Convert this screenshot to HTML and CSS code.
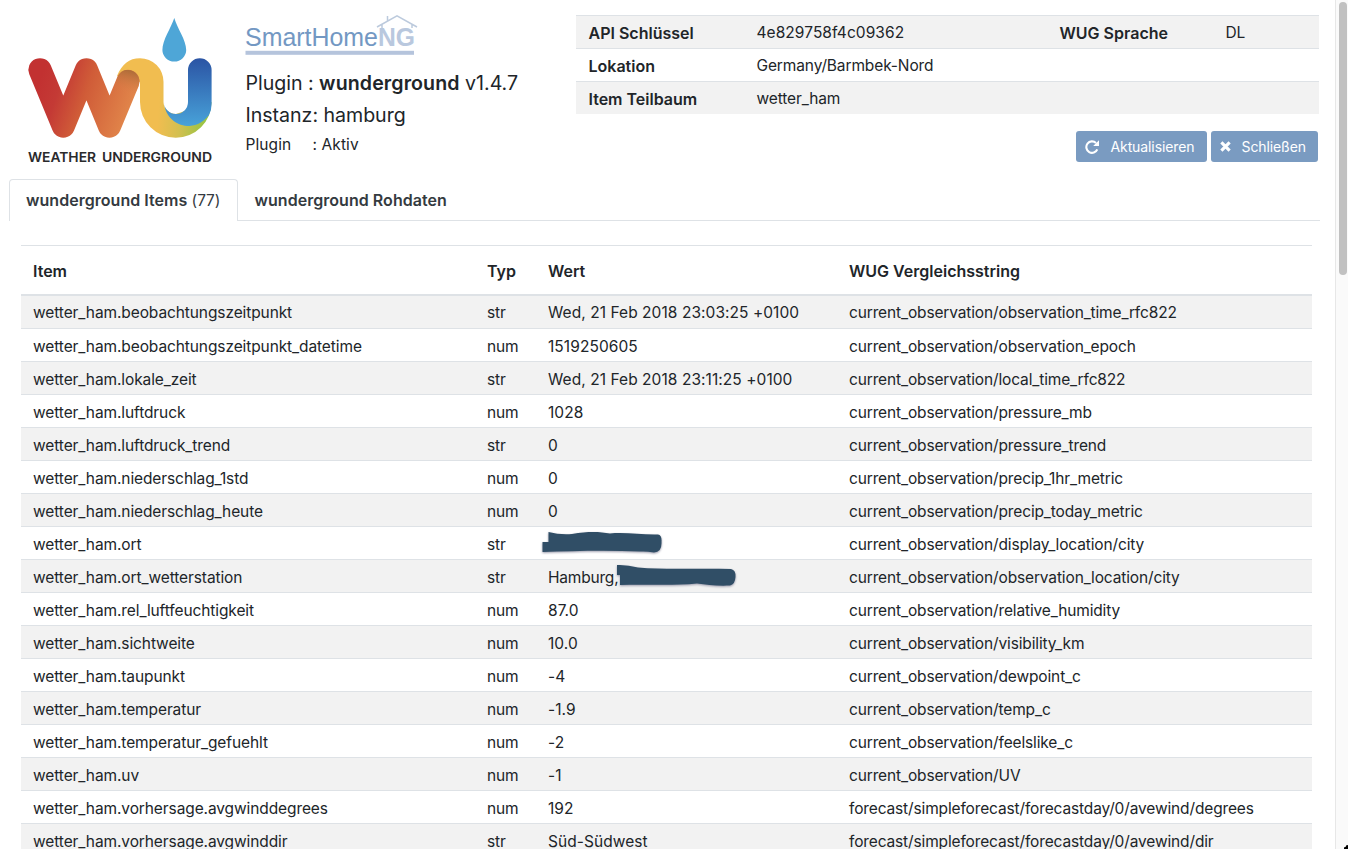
FILE: index.html
```html
<!DOCTYPE html>
<html lang="de">
<head>
<meta charset="utf-8">
<title>wunderground</title>
<link rel="stylesheet" href="styles.css">
</head>
<body>
<div class="page">
<main class="content">
<header class="head">
<svg class="wu-logo" viewBox="0 0 230 170" role="img" aria-label="Weather Underground">
<defs>
<linearGradient id="w" gradientUnits="userSpaceOnUse" x1="38" y1="85" x2="128" y2="116"><stop offset="0" stop-color="#c23131"/><stop offset=".22" stop-color="#c43a35"/><stop offset=".5" stop-color="#d05c38"/><stop offset="1" stop-color="#e1854a"/></linearGradient>
<linearGradient id="b" x1="0" y1="0" x2="0" y2="1"><stop offset="0" stop-color="#2b54a4"/><stop offset="1" stop-color="#48a2d9"/></linearGradient>
<linearGradient id="y" gradientUnits="userSpaceOnUse" x1="158" y1="115" x2="211" y2="118"><stop offset="0" stop-color="#f1bd50"/><stop offset=".4" stop-color="#d4bf50"/><stop offset="1" stop-color="#8bc540"/></linearGradient>
<linearGradient id="s" gradientUnits="userSpaceOnUse" x1="130" y1="70" x2="124" y2="93"><stop offset="0" stop-color="#ac6c38"/><stop offset="1" stop-color="#dd8249" stop-opacity="0"/></linearGradient>
</defs>
<path fill="url(#y)" d="M117 76C122 64 129 58.200 140 58.200A23.500 23.500 0 0 1 163.500 81.700V102A12.200 12.200 0 0 0 176 114L211.500 102A35.600 35.600 0 0 1 140 102V82Z"/>
<path fill="url(#b)" d="M188 70A11.800 11.800 0 0 1 211.600 70V104Q211.600 110 209 115C202 124 194 126 187 126C176 125 165 117 164 102A12 12 0 0 0 188 102Z"/>
<path fill="none" stroke="url(#w)" stroke-width="23.200" stroke-linecap="round" stroke-linejoin="round" d="M40 69.800 63.300 126 86.500 69.800 109.500 126 128 81.500"/>
<path fill="url(#s)" d="M117.500 77C121 70 125 70 128 70A11.500 11.500 0 0 1 139 85L132 100 113 92Z"/>
<path fill="#4ea6d7" d="M174.300 18C177 28 186.200 40 186.200 50A11.900 11.500 0 0 1 162.400 50C162.400 40 171 28 174.300 18Z"/>
<text class="wu-name" x="28" y="161.500" textLength="68" lengthAdjust="spacingAndGlyphs">WEATHER</text>
<text class="wu-name" x="102" y="161.500" textLength="110" lengthAdjust="spacingAndGlyphs">UNDERGROUND</text>
</svg>
<section class="plugin">
<svg class="shng" viewBox="0 0 180 56" role="img" aria-label="SmartHomeNG">
<text class="shng-a" x="0" y="46" textLength="133" lengthAdjust="spacingAndGlyphs">SmartHome</text>
<text class="shng-b" x="133" y="46" textLength="37" lengthAdjust="spacingAndGlyphs">NG</text>
<path class="roof" d="M132 27 152 15.800 172 27M142.500 21V16M137 24V28M167 24V28"/>
<rect class="shng-line" x="0.500" y="50.800" width="168.500" height="4"/>
</svg>
<h1 class="line big l1">Plugin : <b>wunderground</b> v1.4.7</h1>
<div class="line big l2">Instanz: hamburg</div>
<div class="line small"><span class="label">Plugin</span><span>: Aktiv</span></div>
</section>
<section class="side">
<table class="info">
<tr><th class="i1">API Schlüssel</th><td class="i2"><span class="key">4e829758f4c09362</span></td><th class="i3">WUG Sprache</th><td>DL</td></tr>
<tr><th>Lokation</th><td>Germany/Barmbek-Nord</td><td></td><td></td></tr>
<tr><th>Item Teilbaum</th><td>wetter_ham</td><td></td><td></td></tr>
</table>
<div class="actions">
<button class="btn reload"><svg class="ico" viewBox="0 0 14 14"><path fill="none" stroke="#fff" stroke-width="2.100" d="M12.300 9.300A5.700 5.700 0 1 1 11 3"/><path fill="#fff" d="M14 .3V6.100H8.200Z"/></svg><span>Aktualisieren</span></button>
<button class="btn close"><svg class="ico x" viewBox="0 0 12 12"><path stroke="#fff" stroke-width="3.400" d="M1.500 1.500 10.500 10.500M10.500 1.500 1.500 10.500"/></svg><span>Schließen</span></button>
</div>
</section>
</header>
<nav class="tabs"><a class="tab active"><b>wunderground Items</b> (77)</a><a class="tab second"><b>wunderground Rohdaten</b></a></nav>
<table class="items">
<thead><tr><th class="c1">Item</th><th class="c2">Typ</th><th class="c3">Wert</th><th>WUG Vergleichsstring</th></tr></thead>
<tbody>
<tr><td>wetter_ham.beobachtungszeitpunkt</td><td>str</td><td>Wed, 21 Feb 2018 23:03:25 +0100</td><td>current_observation/observation_time_rfc822</td></tr>
<tr><td>wetter_ham.beobachtungszeitpunkt_datetime</td><td>num</td><td>1519250605</td><td>current_observation/observation_epoch</td></tr>
<tr><td>wetter_ham.lokale_zeit</td><td>str</td><td>Wed, 21 Feb 2018 23:11:25 +0100</td><td>current_observation/local_time_rfc822</td></tr>
<tr><td>wetter_ham.luftdruck</td><td>num</td><td>1028</td><td>current_observation/pressure_mb</td></tr>
<tr><td>wetter_ham.luftdruck_trend</td><td>str</td><td>0</td><td>current_observation/pressure_trend</td></tr>
<tr><td>wetter_ham.niederschlag_1std</td><td>num</td><td>0</td><td>current_observation/precip_1hr_metric</td></tr>
<tr><td>wetter_ham.niederschlag_heute</td><td>num</td><td>0</td><td>current_observation/precip_today_metric</td></tr>
<tr><td>wetter_ham.ort</td><td>str</td><td class="mark"><svg class="scribble s1" viewBox="0 0 122 24"><path d="M6.500 2Q18 5 30 4C48 1 58 2 68 3.500 84 2 100 5 116 4.500Q120 5 119.500 12 120 22 112 22.500 104 21 98 21.500C65 20 30 21 .5 22V12H6.500Z"/></svg></td><td>current_observation/display_location/city</td></tr>
<tr><td>wetter_ham.ort_wetterstation</td><td>str</td><td class="mark">Hamburg,<svg class="scribble s2" viewBox="0 0 122 24"><path d="M0 2Q10 1.500 21 4.500C50 7 80 5 114 6Q119 7 118.500 14 118 21.500 113 22.500C100 23 90 22 80 20.500 55 23 30 21 3 22V12H0Z"/></svg></td><td>current_observation/observation_location/city</td></tr>
<tr><td>wetter_ham.rel_luftfeuchtigkeit</td><td>num</td><td>87.0</td><td>current_observation/relative_humidity</td></tr>
<tr><td>wetter_ham.sichtweite</td><td>num</td><td>10.0</td><td>current_observation/visibility_km</td></tr>
<tr><td>wetter_ham.taupunkt</td><td>num</td><td>-4</td><td>current_observation/dewpoint_c</td></tr>
<tr><td>wetter_ham.temperatur</td><td>num</td><td>-1.9</td><td>current_observation/temp_c</td></tr>
<tr><td>wetter_ham.temperatur_gefuehlt</td><td>num</td><td>-2</td><td>current_observation/feelslike_c</td></tr>
<tr><td>wetter_ham.uv</td><td>num</td><td>-1</td><td>current_observation/UV</td></tr>
<tr><td>wetter_ham.vorhersage.avgwinddegrees</td><td>num</td><td>192</td><td>forecast/simpleforecast/forecastday/0/avewind/degrees</td></tr>
<tr><td>wetter_ham.vorhersage.avgwinddir</td><td>str</td><td>Süd-Südwest</td><td>forecast/simpleforecast/forecastday/0/avewind/dir</td></tr>
</tbody>
</table>
</main>
<aside class="scroll"><div class="thumb"></div><svg class="cursor" viewBox="0 0 8 5"><path d="M4 5V3.500L6 2.500V1.500L8 1V5Z"/></svg></aside>
</div>
</body>
</html>
```
FILE: styles.css
```css
* { box-sizing: border-box; }
body { margin: 0; background: #fff; color: #212529; font: 15.5px/24px Inter, "Liberation Sans", sans-serif; letter-spacing: -0.12px; }
.page { display: flex; width: 1348px; height: 849px; overflow: hidden; }
.content { width: 1335px; flex: none; }
.head { display: flex; height: 179px; }
.wu-logo { width: 230px; height: 170px; flex: none; }
.wu-name { font: 600 13.4px Inter, sans-serif; fill: #2a2a2c; letter-spacing: 0; }
.plugin { width: 346px; padding-left: 15px; flex: none; }
.shng { display: block; width: 180px; height: 56px; }
.shng-a { font: 25px "Liberation Sans", sans-serif; fill: #7398c3; letter-spacing: 0; }
.shng-b { font: bold 25px "Liberation Sans", sans-serif; fill: #b9c8de; letter-spacing: 0; }
.shng-line { fill: #b5c4dc; }
.roof { fill: none; stroke: #bccadd; stroke-width: 1.5; }
.line { margin: 0; font-weight: 400; white-space: nowrap; padding-left: 0.5px; }
.big { font-size: 19.6px; letter-spacing: -0.03px; }
.big b { font-weight: 600; letter-spacing: 0.1px; }
.l1 { margin-top: 15px; line-height: 24px; }
.l2 { margin-top: 8px; line-height: 24px; }
.small { margin-top: 6px; display: flex; line-height: 24px; letter-spacing: 0.1px; }
.label { width: 67px; }
.side { width: 743px; padding-top: 15px; }
table { border-collapse: separate; border-spacing: 0; table-layout: fixed; }
th { text-align: left; font-weight: 600; font-size: 16px; letter-spacing: 0; }
th, td { white-space: nowrap; padding: 3px 12px 0; }
.info { width: 743px; }
.info th, .info td { height: 33px; border-top: 1px solid #dee2e6; padding: 1px 12px 0 12.5px; }
.info td { padding-top: 2px; }
.info tr:nth-child(odd) { background: #f2f2f2; }
.key { letter-spacing: 0.06px; }
.i1 { width: 168px; }
.i2 { width: 303px; }
.i3 { width: 166px; }
.actions { display: flex; justify-content: flex-end; gap: 4px; padding: 17px 1px 0 0; }
.btn { display: flex; align-items: center; height: 31px; border: 0; border-radius: 3px; padding: 0 9px; background: #7a9bc1; color: #fff; font: 14px/21px Inter, sans-serif; letter-spacing: -0.1px; }
.reload { width: 130.5px; }
.close { width: 107.5px; }
.ico { width: 14px; height: 14px; margin-right: 11.5px; flex: none; }
.x { width: 11px; height: 11px; margin-right: 11px; }
.tabs { display: flex; height: 42px; margin-left: 9px; width: 1311px; box-shadow: inset 0 -1px #dee2e6; }
.tab { padding: 8px 16px; color: #343a40; white-space: nowrap; }
.tab b { font-weight: 600; font-size: 16px; letter-spacing: 0.04px; }
.active { width: 229px; background: #fff; border: 1px solid #dee2e6; border-bottom: 0; border-radius: 4px 4px 0 0; }
.second { padding: 9px 16.5px; }
.items { margin: 24px 0 0 21px; width: 1291px; }
.items thead th { height: 51px; border-top: 1px solid #dee2e6; border-bottom: 2px solid #dee2e6; padding-top: 1px; }
.items td { height: 33px; border-top: 1px solid #dee2e6; }
.items tbody tr:first-child td { height: 32px; border-top: 0; padding-top: 1px; }
.items tbody tr:nth-child(odd) { background: #f2f2f2; }
.items td:first-child { letter-spacing: -0.1px; }
.items td:nth-child(3) { letter-spacing: 0.06px; }
.items td:nth-child(4) { letter-spacing: -0.14px; }
.c1 { width: 454px; }
.c2 { width: 61px; }
.c3 { width: 301px; }
.items td.mark { position: relative; letter-spacing: -0.2px; }
.scribble { position: absolute; width: 122px; height: 24px; fill: #304e66; filter: drop-shadow(0 1px 1px #99a); }
.s1 { left: 6px; top: 3px; }
.s2 { left: 81px; top: 3px; }
.scroll { position: relative; width: 13px; border-left: 1px solid #e7e7e7; background: #fafafa; padding: 2px 0 0 3px; }
.thumb { width: 8px; height: 273px; border-radius: 4px; background: #c1c1c1; }
.cursor { position: absolute; right: 0; bottom: 0; width: 8px; height: 5px; }
```
